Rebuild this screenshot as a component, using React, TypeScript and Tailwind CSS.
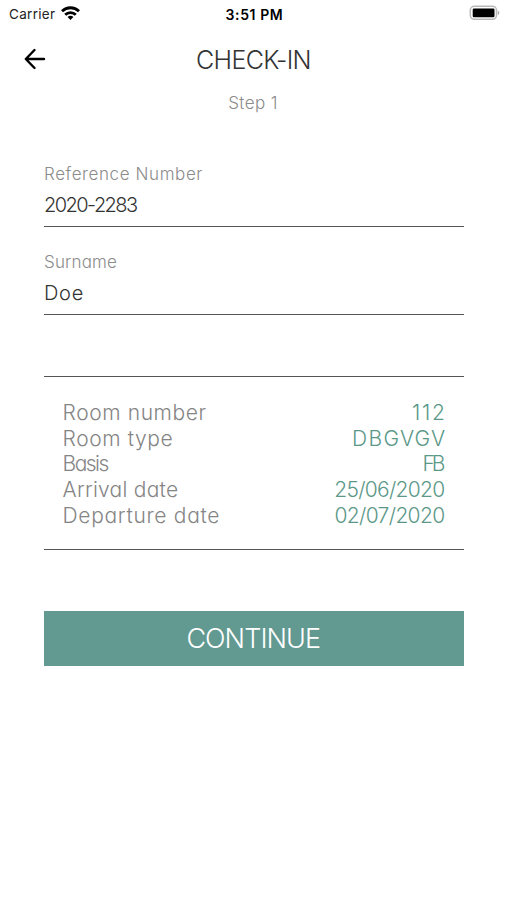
const details = [
  { label: 'Room number', value: '112', labelStyle: 'tracking-[0.6px]', valueStyle: 'tracking-[1.7px] -mr-[1px]' },
  { label: 'Room type', value: 'DBGVGV', labelStyle: 'tracking-[0.6px]', valueStyle: 'tracking-[1.3px] -mr-[1px]' },
  { label: 'Basis', value: 'FB', labelStyle: 'tracking-[-1.5px]', valueStyle: 'tracking-[-3px] mr-[3px]' },
  { label: 'Arrival date', value: '25/06/2020', labelStyle: 'tracking-[0.25px]', valueStyle: 'tracking-[-0.7px] mr-[1px]' },
  { label: 'Departure date', value: '02/07/2020', labelStyle: 'tracking-[0.7px]', valueStyle: 'tracking-[-0.65px] mr-[1px]' },
]

function StatusBar() {
  return (
    <div className="grid h-7 grid-cols-3 items-center pl-[9px] pr-[7px] text-[13.5px] text-black">
      <div className="flex items-center gap-[6px]">
        <span className="tracking-[0.3px] text-[#222]">Carrier</span>
        <svg className="-mt-[2px]" width="19" height="14" viewBox="0 0 19 14" fill="none" stroke="#000" strokeWidth="2.8">
          <path d="M1 5.2a12.2 12.2 0 0 1 17 0" />
          <path d="M4.2 8.8a7.6 7.6 0 0 1 10.6 0" />
          <path d="M9.5 14 6.6 11.1a4 4 0 0 1 5.8 0Z" fill="#000" stroke="none" />
        </svg>
      </div>
      <span className="text-center text-[14px] font-semibold tracking-[0.6px]">3:51 PM</span>
      <svg className="-mt-[2px] justify-self-end" width="31" height="16" viewBox="0 0 31 16">
        <rect x="1.3" y="1.3" width="26.2" height="13" rx="4" fill="#fff" stroke="#b9b9b9" strokeWidth="1.5" />
        <rect x="3.7" y="3.5" width="21.8" height="8.8" rx="1.3" fill="#000" />
        <path d="M28.8 5.8c2 .6 2 3.6 0 4.2Z" fill="#aaa" />
      </svg>
    </div>
  )
}

export default function App() {
  return (
    <main className="min-h-[900px] w-[507px] bg-white font-['Inter','Liberation_Sans',sans-serif]">
      <StatusBar />
      <div className="font-light [font-feature-settings:'cv11']">
        <header className="grid h-[63px] grid-cols-[100px_1fr_100px] items-center">
          <svg className="-mt-[1px] ml-6" width="22" height="22" viewBox="0 0 22 22" fill="none" stroke="#000" strokeWidth="2.4" strokeLinecap="round" strokeLinejoin="round">
            <path d="M20 11H2.5M10.5 2 1.8 11l8.7 9" />
          </svg>
          <h1 className="pt-[2px] text-center text-[25px] tracking-[-0.65px] text-[#333]">CHECK-IN</h1>
        </header>
        <p className="pr-[1px] text-center text-[17px] leading-6 tracking-[0.4px] text-[#8c8c8c]">Step 1</p>

        <section className="mx-11 mt-[45px] w-[419.5px] text-[#333]">
          <div className="h-[67px] border-b border-[#555]">
            <p className="text-[17px] leading-7 tracking-[0.6px] text-[#8c8c8c]">Reference Number</p>
            <p className="text-[20px] leading-[34px] tracking-[-1.55px]">2020-2283</p>
          </div>
          <div className="mt-[21px] h-[67px] border-b border-[#555]">
            <p className="text-[17px] leading-7 tracking-[0.15px] text-[#8c8c8c]">Surname</p>
            <p className="text-[20px] leading-[34px] tracking-[0.7px]">Doe</p>
          </div>
          <div className="mt-[61px] h-[174px] border-y border-[#555] pl-[18.5px] pr-[18px] pt-[23px] text-[21px] leading-[25.7px]">
            {details.map((row) => (
              <div key={row.label} className="flex justify-between">
                <span className={`text-[#858585] ${row.labelStyle}`}>{row.label}</span>
                <span className={`text-[#5b9888] ${row.valueStyle}`}>{row.value}</span>
              </div>
            ))}
          </div>
          <button className="mt-[61px] h-[55px] w-full bg-[#629991] pr-[1px] pt-[2px] text-[27px] tracking-[-0.95px] text-white">
            CONTINUE
          </button>
        </section>
      </div>
    </main>
  )
}
